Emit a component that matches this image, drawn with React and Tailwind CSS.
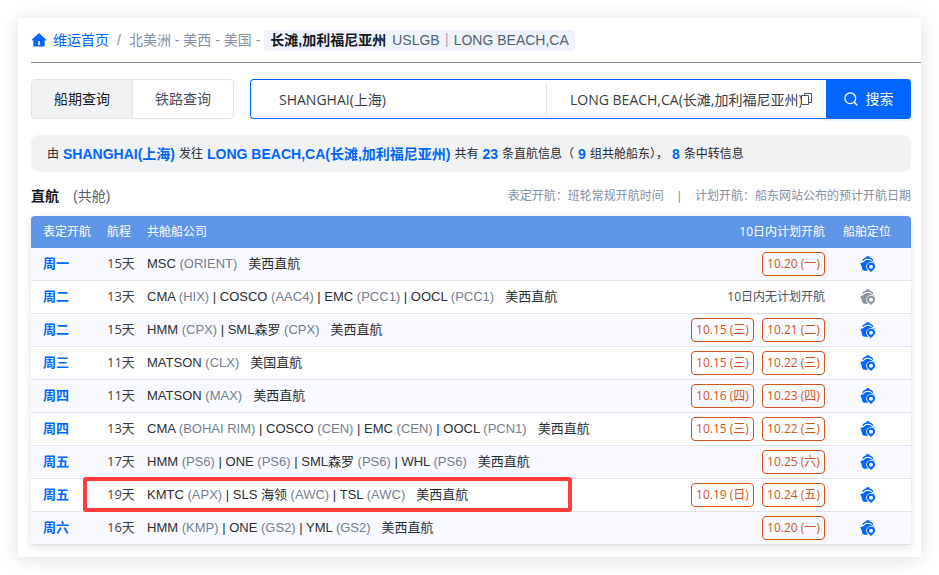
import React from "react";

const ARIAL = "font-['Liberation_Sans','Noto_Sans_CJK_SC',sans-serif]";
const UI = "font-['Open_Sans','Noto_Sans_CJK_SC',sans-serif]";

const rows = [
  { day: "周一", time: "15天", lines: [["MSC", "ORIENT"]], route: "美西直航", dates: ["10.20 (一)"] },
  { day: "周二", time: "13天", lines: [["CMA", "HIX"], ["COSCO", "AAC4"], ["EMC", "PCC1"], ["OOCL", "PCC1"]], route: "美西直航", dates: [] },
  { day: "周二", time: "15天", lines: [["HMM", "CPX"], ["SML森罗", "CPX"]], route: "美西直航", dates: ["10.15 (三)", "10.21 (二)"] },
  { day: "周三", time: "11天", lines: [["MATSON", "CLX"]], route: "美国直航", dates: ["10.15 (三)", "10.22 (三)"] },
  { day: "周四", time: "11天", lines: [["MATSON", "MAX"]], route: "美西直航", dates: ["10.16 (四)", "10.23 (四)"] },
  { day: "周四", time: "13天", lines: [["CMA", "BOHAI RIM"], ["COSCO", "CEN"], ["EMC", "CEN"], ["OOCL", "PCN1"]], route: "美西直航", dates: ["10.15 (三)", "10.22 (三)"] },
  { day: "周五", time: "17天", lines: [["HMM", "PS6"], ["ONE", "PS6"], ["SML森罗", "PS6"], ["WHL", "PS6"]], route: "美西直航", dates: ["10.25 (六)"] },
  { day: "周五", time: "19天", lines: [["KMTC", "APX"], ["SLS 海领", "AWC"], ["TSL", "AWC"]], route: "美西直航", dates: ["10.19 (日)", "10.24 (五)"], marked: true },
  { day: "周六", time: "16天", lines: [["HMM", "KMP"], ["ONE", "GS2"], ["YML", "GS2"]], route: "美西直航", dates: ["10.20 (一)"] },
];

function HomeIcon() {
  return (
    <svg viewBox="0 0 14 14" className="h-3.5 w-3.5" fill="#0066ff" aria-hidden="true">
      <path fillRule="evenodd" d="M7 0 L14 6.6 V7.5 H12.6 V13.4 H1.4 V7.5 H0 V6.6 Z M6.2 8 V12 H7.8 V8 Z" />
    </svg>
  );
}

function ShipIcon() {
  return (
    <svg viewBox="0 0 16 16" className="h-4 w-4" aria-hidden="true">
      <path d="M6.2 0.3 h3.2 v1.2 c2 0.2 3.4 1.2 4 3 l-1.1 0.5 C11.4 3.5 9.9 2.7 7.8 2.7 5.7 2.7 4.2 3.5 3.3 5 L2.2 4.5 C2.9 2.7 4.3 1.7 6.2 1.5 Z" fill="currentColor" />
      <path d="M3.6 6 C4.8 4.6 6 4 7.8 4 c1.8 0 3.2 0.6 4.2 1.6 l2.6 0.9 V7.3 A5.2 5.2 0 0 0 11 5.9 A4.9 4.9 0 0 0 6.2 10.8 c0 1.5 0.8 2.6 1.9 4 H4.2 C2.4 14.4 2.1 12.8 1.8 11 L0.4 7.2 Z" fill="currentColor" />
      <path fillRule="evenodd" d="M11 6.7 a4.1 4.1 0 0 1 4.1 4.1 c0 2.1 -2.5 3.4 -4.1 5.2 c-1.6 -1.8 -4.1 -3.1 -4.1 -5.2 A4.1 4.1 0 0 1 11 6.7 Z M11 8.8 a2 2 0 1 0 0 4 a2 2 0 0 0 0 -4 Z" fill="currentColor" />
    </svg>
  );
}

function CopyIcon() {
  return (
    <svg viewBox="0 0 11 12" className="h-3 w-[11px]" fill="none" stroke="#4b5159" aria-hidden="true">
      <path d="M0.5 2.5 H7.5 V11.5 H0.5 Z M3.5 2.5 V0.5 H10.5 V9.5 H7.5" />
    </svg>
  );
}

function SearchIcon() {
  return (
    <svg viewBox="0 0 14 14" className="h-3.5 w-3.5" fill="none" stroke="white" strokeWidth="1.3" aria-hidden="true">
      <circle cx="6.3" cy="6.3" r="5.4" />
      <path d="M10.2 10.2 L13.5 13.5" />
    </svg>
  );
}

function Row({ row }) {
  return (
    <tr className="h-[33px] *:border-b *:border-[#e0e3eb] odd:bg-[#f9faff]">
      <td className="pl-3 text-[13px] font-bold text-[#0066ff]">{row.day}</td>
      <td className={`relative text-[13px] text-[#3a3d42] ${UI}`}>
        {row.time}
        {row.marked && (
          <span className="pointer-events-none absolute -left-6 -top-0.5 h-[35px] w-[489px] rounded-[3px] border-4 border-[#ff3b3b]" />
        )}
      </td>
      <td className="whitespace-nowrap text-[13px] text-[#2b2e33]">
        {row.lines.map(([name, code], i) => (
          <React.Fragment key={name}>
            {i > 0 && " | "}
            {name} <span className="text-[#73808f]">({code})</span>
          </React.Fragment>
        ))}
        <span className="ml-[11px]">{row.route}</span>
      </td>
      <td className={`text-xs ${UI}`}>
        <div className="flex items-center justify-end gap-2">
          {row.dates.map((d) => (
            <a key={d} href="#" className="flex h-6 w-[63px] items-center justify-center whitespace-nowrap rounded border border-[#d1541c] text-[#d1541c]">
              {d}
            </a>
          ))}
          {row.dates.length === 0 && <span className="text-[#4b5159]">10日内无计划开航</span>}
        </div>
      </td>
      <td className="pl-[35px]">
        <button aria-label="船舶定位" className={`block ${row.dates.length ? "text-[#0066ff]" : "text-[#8a939e]"}`}>
          <ShipIcon />
        </button>
      </td>
    </tr>
  );
}

function Em({ children }) {
  return <b className="text-sm leading-5 text-[#0066ff]">{children}</b>;
}

export default function App() {
  return (
    <div className={`bg-white p-[18px] ${ARIAL}`}>
      <main className="bg-white pb-3 pl-[13px] shadow-[0_2px_18px_rgba(0,0,0,0.13)]">
        <nav className="flex h-[45px] items-center border-b border-[#8590a0] text-sm leading-5 text-[#8590a0]">
          <a href="#" className="flex items-center gap-[7px] pl-px text-[#0066ff]">
            <HomeIcon />
            维运首页
          </a>
          <span className="px-2">/</span>
          <span>北美洲 - 美西 - 美国 -</span>
          <span className="ml-1 flex h-[21px] items-center gap-1.5 rounded bg-[#edf2fc] px-1.5 text-[#56626f]">
            <b className="text-[#16181c]">长滩,加利福尼亚州</b>
            <span>USLGB｜LONG BEACH,CA</span>
          </span>
        </nav>

        <div className="pr-2.5">
          <div className="mt-4 flex h-10 gap-4 text-sm">
            <div className="flex w-[203px] rounded border border-[#e2e4e9]">
              <button className="flex-1 rounded-l bg-[#f1f2f4] text-[#16181c]">船期查询</button>
              <button className="flex-1 border-l border-[#e2e4e9] text-[#4b5159]">铁路查询</button>
            </div>
            <form className="flex min-w-0 flex-1" onSubmit={(e) => e.preventDefault()}>
              <div className={`grid min-w-0 flex-1 grid-cols-[296fr_279fr] items-center rounded-l border border-r-0 border-[#0066ff] ${UI}`}>
                <input aria-label="起运港" defaultValue="SHANGHAI(上海)" className="h-8 w-full min-w-0 border-r border-[#e2e4e9] pl-7 text-sm text-[#3a3d42] outline-none" />
                <div className="flex min-w-0 items-center pl-[23px] pr-3.5">
                  <input aria-label="目的港" defaultValue="LONG BEACH,CA(长滩,加利福尼亚州)" className="h-8 min-w-0 flex-1 text-sm text-[#3a3d42] outline-none" />
                  <button type="button" aria-label="复制">
                    <CopyIcon />
                  </button>
                </div>
              </div>
              <button className="flex w-[85px] items-center justify-center gap-2 rounded-r bg-[#0066ff] text-white shadow-[0_2px_0_rgba(5,145,255,0.1)]">
                <SearchIcon />
                搜索
              </button>
            </form>
          </div>

          <p className="mt-4 flex h-[37px] items-center gap-1 whitespace-nowrap rounded-lg bg-[#f1f2f4] pl-4 text-xs text-[#26292e]">
            <span>由</span>
            <Em>SHANGHAI(上海)</Em>
            <span>发往</span>
            <Em>LONG BEACH,CA(长滩,加利福尼亚州)</Em>
            <span>共有</span>
            <Em>23</Em>
            <span>条直航信息（</span>
            <Em>9</Em>
            <span>组共舱船东），</span>
            <Em>8</Em>
            <span>条中转信息</span>
          </p>

          <div className="flex h-11 items-center justify-between pt-1">
            <h2 className="flex gap-3.5 text-sm">
              <b className="text-[#16181c]">直航</b>
              <span className="text-[#5b6168]">(共舱)</span>
            </h2>
            <div className="flex text-xs text-[#8590a0]">
              <span>表定开航：班轮常规开航时间</span>
              <span className="px-3.5">|</span>
              <span>计划开航：船东网站公布的预计开航日期</span>
            </div>
          </div>

          <table className="w-full table-fixed border-separate border-spacing-0 rounded-t shadow-[0_2px_8px_rgba(0,0,0,0.12)]">
            <colgroup>
              <col className="w-[76px]" />
              <col className="w-10" />
              <col />
              <col className="w-40" />
              <col className="w-[86px]" />
            </colgroup>
            <thead>
              <tr className="h-8 text-left text-xs text-white *:bg-[#5e95e8] *:font-normal">
                <th className="rounded-tl pl-3">表定开航</th>
                <th>航程</th>
                <th>共舱船公司</th>
                <th className={`text-right ${UI}`}>10日内计划开航</th>
                <th className="rounded-tr pl-[18px]">船舶定位</th>
              </tr>
            </thead>
            <tbody>
              {rows.map((row, i) => (
                <Row key={i} row={row} />
              ))}
            </tbody>
          </table>
        </div>
      </main>
    </div>
  );
}
